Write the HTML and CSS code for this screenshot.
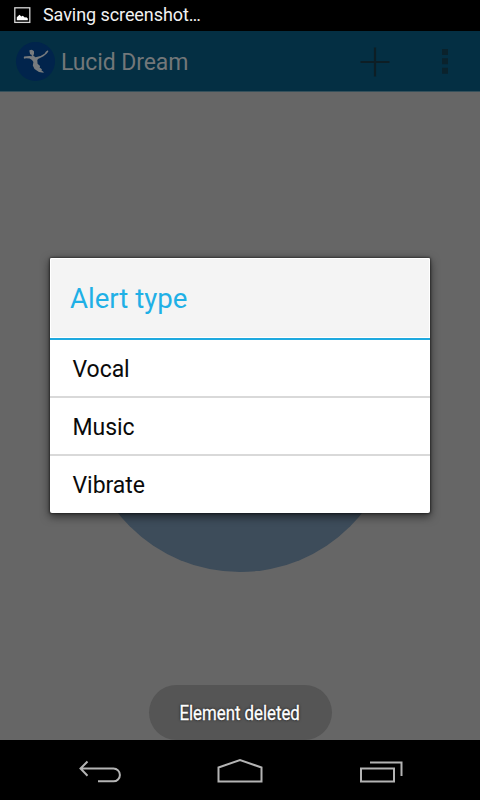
FILE: index.html
```html
<!DOCTYPE html>
<html lang="en">
<head>
<meta charset="utf-8">
<title>Lucid Dream</title>
<link rel="stylesheet" href="styles.css">
</head>
<body>
<div class="phone">
  <div class="status">
    <svg width="18" height="18" viewBox="0 0 18 18"><rect x="1.8" y="1.8" width="15" height="14.600" fill="none" stroke="#d8d8d8" stroke-width="1.300"/><path d="M3.800 14.300v-3l2.700-2.500 1.800 1.700 1.500-.8 2 1.700 1.500-.2 1.500 1.400v1.700z" fill="#fff"/></svg>
    <span class="status-text">Saving screenshot…</span>
  </div>
  <header class="bar">
    <svg class="logo" width="40" height="40" viewBox="0 0 40 40"><circle cx="20.500" cy="19.500" r="19.500" fill="#01244c"/><path d="M14.300 8.500Q17 6.500 19 9.200V12l-.8 1.500 2.300 1.700 5-1.200 4-2.300 1.500-2.200 2-1.300.3 1.300-1.500 2-3.300 2.700-5.500 2.700-.7 1.400.3 3.400 2.500 2.300-.5 1.500 2.300 1.800-.4 1.200 2.200 1.500-.2.800-4.500-.8-4.500-3-1.700-3.500.6-3.500-1.400-2-2.400-1.500-3.600-.3-1.500.6-.8-.8.400-1.500 5.500-.5 2.400.2-.6-1.500-1.300-.5z" fill="#777b7e"/></svg>
    <h1 class="title">Lucid Dream</h1>
    <svg class="add" width="30" height="30" viewBox="0 0 30 30"><path d="M15 .5v29M.5 15h29" stroke="#0d1e25" stroke-width="2.200"/></svg>
    <svg class="more" width="6" height="25" viewBox="0 0 6 25"><path d="M0 0h6v6H0zM0 9.300h6v6H0zM0 18.700h6v6H0z" fill="#0a222c"/></svg>
  </header>
  <main class="content">
    <div class="disc"></div>
    <section class="dialog">
      <h2 class="dialog-title">Alert type</h2>
      <ul class="options">
        <li>Vocal</li>
        <li>Music</li>
        <li>Vibrate</li>
      </ul>
    </section>
    <div class="toast"><span>Element deleted</span></div>
  </main>
  <nav class="nav">
    <svg width="140" height="60" viewBox="0 0 140 60"><path d="M80.500 28.500H113.500a6.300 6.300 0 0 1 0 12.800H98M87.500 21.500l-7 7 7 7.200" fill="none" stroke="#b4b4b4" stroke-width="2"/></svg>
    <svg width="200" height="60" viewBox="0 0 200 60"><path d="M78.500 41.500V27.500l21.500-7.500 21.500 7.500v14z" fill="none" stroke="#b4b4b4" stroke-width="2"/></svg>
    <svg width="140" height="60" viewBox="0 0 140 60"><path d="M21 28.500h33v13H21zM30 22.500h31.500V36" fill="none" stroke="#b4b4b4" stroke-width="2"/></svg>
  </nav>
</div>
</body>
</html>
```
FILE: styles.css
```css
* { box-sizing: border-box; }
body { margin: 0; background: #000; font-family: Roboto, sans-serif; }
h1, h2, ul { margin: 0; padding: 0; font-weight: 400; }
.phone { width: 480px; height: 800px; display: flex; flex-direction: column; overflow: hidden; }
.status { height: 31px; display: flex; align-items: center; padding: 0 0 1px 13px; color: #f2f2f2; background: #000; }
.status-text { margin-left: 12px; font-size: 18px; line-height: 30px; letter-spacing: -.07px; }
.bar { height: 61px; flex: none; display: flex; align-items: center; padding: 1px 0 0 15px; background: #042f43; border-bottom: 1px solid #35505b; }
.title { margin-left: 6px; width: 299px; padding-top: 2px; font-size: 23px; letter-spacing: -.1px; line-height: 30px; color: #737779; }
.add { margin-top: 0; }
.more { margin: 0 0 0 52px; }
.content { position: relative; height: 648px; background: #666; display: flex; flex-direction: column; align-items: center; }
.disc { position: absolute; left: 84px; top: 168px; width: 312px; height: 312px; border-radius: 50%; background: #3d4c5a; }
.dialog { position: relative; width: 380px; height: 255px; margin-top: 166px; background: #fff; border-radius: 2px; box-shadow: 0 0 2px 1px rgba(0,0,0,.4), 0 3px 8px 1px rgba(0,0,0,.5); }
.dialog-title { height: 82px; padding-left: 20px; font-size: 27.600px; line-height: 81px; color: #1fb0e6; background: #f4f4f4; border-bottom: 2px solid #1fa9df; border-radius: 2px 2px 0 0; box-shadow: inset 0 0 0 1px #fff; }
.options { list-style: none; }
.options li { height: 58px; padding: 1px 0 0 22.500px; font-size: 23px; letter-spacing: -.05px; line-height: 58px; color: #0a0a0a; border-bottom: 2px solid #d9d9d9; }
.options li:last-child { border-bottom: 0; }
.toast { width: 183px; height: 55px; margin-top: 172px; border-radius: 28px; background: #555; display: flex; align-items: center; justify-content: center; color: #fff; font-size: 20px; text-shadow: 0 0 3px #000; }
.toast span { white-space: nowrap; -webkit-text-stroke: .3px #fff; transform: scaleX(.84); }
.nav { height: 60px; display: flex; background: #000; }
```
